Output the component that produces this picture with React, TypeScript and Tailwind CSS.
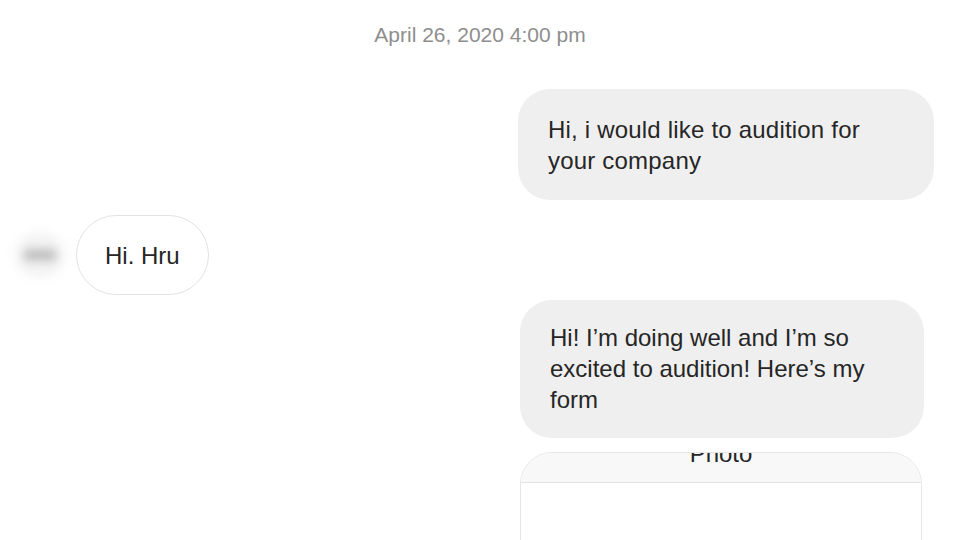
import React from "react";

const font = "font-['Liberation_Sans',Arial,sans-serif]";

const OutgoingBubble = ({
  lines,
  className,
}: {
  lines: string[];
  className: string;
}) => (
  <div
    className={`rounded-[32px] bg-[#efefef] text-[24px] leading-[31px] text-[#262626] pl-[30px] pr-[24px] ${className}`}
  >
    {lines.map((line) => (
      <div key={line} className="whitespace-nowrap">
        {line}
      </div>
    ))}
  </div>
);

const App = () => {
  return (
    <div className={`w-[960px] h-[540px] overflow-hidden bg-white ${font}`}>
      {/* timestamp */}
      <div className="h-[70px] pt-[22px] text-center text-[21px] leading-[26px] text-[#8e8e8e]">
        April 26, 2020 4:00 pm
      </div>

      <div className="flex flex-col">
        <div className="flex justify-end pt-[19px] pr-[26px]">
          <OutgoingBubble
            className="w-[416px] pt-[25px] pb-[24px] tracking-[0.2px]"
            lines={["Hi, i would like to audition for", "your company"]}
          />
        </div>

        {/* incoming */}
        <div className="flex items-center pt-[15px] pl-[20px] gap-[16px]">
          <div className="relative w-[40px] h-[40px] flex items-center justify-center">
            <div className="absolute w-[48px] h-[44px] rounded-full bg-[#f2f2f2] blur-[6px]" />
            <div className="absolute w-[34px] h-[12px] rounded-full bg-[#c2c2c2] blur-[4px]" />
          </div>
          <div className="rounded-full border border-[#e3e3e3] h-[80px] px-[28px] flex items-center text-[24px] leading-[31px] text-[#262626]">
            Hi. Hru
          </div>
        </div>

        <div className="flex justify-end pt-[5px] pr-[36px]">
          <OutgoingBubble
            className="w-[404px] pt-[22px] pb-[23px]"
            lines={[
              "Hi! I\u2019m doing well and I\u2019m so",
              "excited to audition! Here\u2019s my",
              "form",
            ]}
          />
        </div>

        <div className="flex justify-end pt-[14px] pr-[38px]">
          <div className="w-[402px] h-[140px] rounded-t-[32px] border border-[#e6e6e6] overflow-hidden">
            <div className="h-[30px] bg-[#f8f8f8] border-b border-[#e3e3e3] overflow-hidden">
              <div className="-mt-[11px] text-center text-[24px] leading-[24px] text-[#262626]">
                Photo
              </div>
            </div>
            <div className="bg-white h-full" />
          </div>
        </div>
      </div>
    </div>
  );
};

export default App;
